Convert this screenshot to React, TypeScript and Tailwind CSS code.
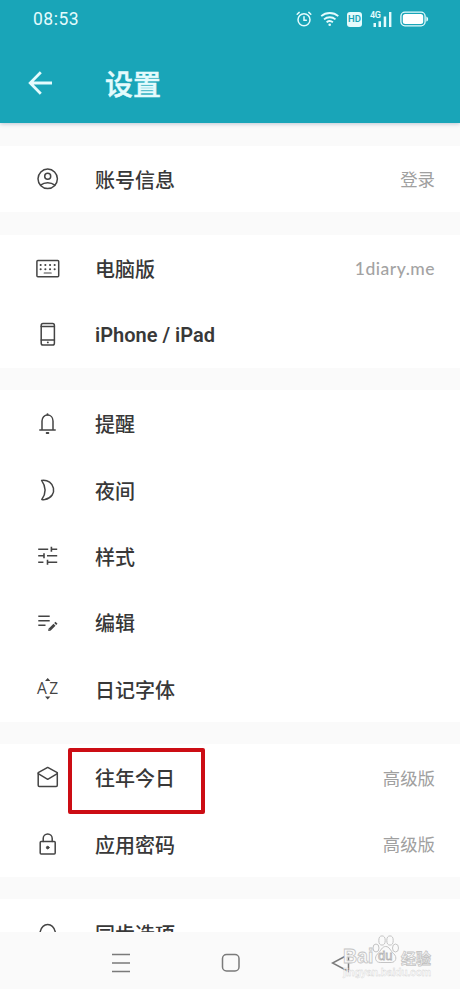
import type { ReactNode } from 'react'

interface SettingItem {
  id: string
  label: string
  icon: ReactNode
  value?: string
  latin?: boolean
  highlighted?: boolean
}

function Icon({ children }: { children: ReactNode }) {
  return (
    <svg
      width="24"
      height="24"
      viewBox="0 0 24 24"
      fill="none"
      stroke="currentColor"
      strokeWidth="1.5"
      strokeLinecap="round"
      strokeLinejoin="round"
      className="shrink-0 text-[#444444]"
    >
      {children}
    </svg>
  )
}

const AccountIcon = () => (
  <Icon>
    <circle cx="11.7" cy="11.8" r="9.7" />
    <circle cx="11.7" cy="9.3" r="3" />
    <path d="M4.6 18.2C8.6 14.9 14.8 14.9 18.8 18.2" />
  </Icon>
)

const KeyboardIcon = () => (
  <Icon>
    <rect x="0.9" y="4.5" width="21.8" height="16.2" rx="1" />
    <path d="M4.6 9h.1M9.3 9h.1M14 9h.1M18.6 9h.1M4.6 13.200h.1M9.3 13.200h.1M14 13.200h.1M18.6 13.200h.1" strokeWidth="2" />
    <path d="M8.2 17h7" strokeWidth="1.2" />
  </Icon>
)

const PhoneIcon = () => (
  <Icon>
    <rect x="5.2" y="1.6" width="13.2" height="21.4" rx="1.8" />
    <path d="M5.2 4.5h13.2M5.2 18h13.2" />
    <path d="M11.8 20.4h.1" strokeWidth="1.8" />
  </Icon>
)

const BellIcon = () => (
  <Icon>
    <path d="M3.8 19h15.400M6 19V10C6 6.400 8.400 4 11.500 4s5.500 2.400 5.500 6v9" />
    <path d="M11.500 3.200v.3M10.700 22h1.600" strokeWidth="2" />
  </Icon>
)

const MoonIcon = () => (
  <Icon>
    <path d="M5.6 2.4c13-1.8 17.5 16 3.2 19.2-1 .2-2.2.1-3-.1 4-5.500 4.3-12.700-.2-19.100z" />
  </Icon>
)

const TuneIcon = () => (
  <Icon>
    <g strokeLinecap="butt" strokeWidth="1.6">
      <path d="M2.200 5.200h10M15.400 2.700v5M15.400 5.200h5.800" />
      <path d="M2.200 11.700h5.200M8 9.200v5M11 11.700h10.200" />
      <path d="M2.200 18.200h5.200M11.500 15.700v5M11.500 18.200h9.700" />
    </g>
  </Icon>
)

const EditIcon = () => (
  <Icon>
    <path d="M2.300 6.200h11.400M2.300 10.700h11.400M2.300 15.200h7.200" strokeWidth="1.600" strokeLinecap="butt" />
    <path d="M13.500 19.700l5-5" strokeWidth="2.800" strokeLinecap="butt" />
    <path d="M19.200 14l1.300-1.300" strokeWidth="2.800" strokeLinecap="butt" />
    <path d="M12.200 21l.3-2.300 2 2z" fill="currentColor" stroke="none" />
  </Icon>
)

// The letters are text, only the two small arrows are drawn
const FontIcon = () => (
  <div className="relative flex h-6 w-6 shrink-0 items-center justify-between pl-px pr-[2px] font-['Open_Sans',sans-serif] text-[15.5px] font-medium leading-none text-[#444444]">
    <span>A</span>
    <span>Z</span>
    <svg width="24" height="24" viewBox="0 0 24 24" fill="currentColor" className="absolute inset-0">
      <path d="M9 3.900l2.700-2.900 2.700 2.900zM9 19.600l2.700 2.900 2.700-2.900z" />
    </svg>
  </div>
)

const MailIcon = () => (
  <Icon>
    <path d="M2.200 7.700v12.600c0 .7.400 1.100 1.100 1.100h16.900c.7 0 1.100-.4 1.100-1.100V7.700l-9.600-5.300z" />
    <path d="M2.200 8.700l9.500 5.600 9.600-5.600" />
  </Icon>
)

const LockIcon = () => (
  <Icon>
    <rect x="4.200" y="9.500" width="15" height="12.500" rx="1" />
    <path d="M7.200 9.500V6.400a4.500 4.500 0 0 1 9 0v3.100" />
    <circle cx="11.700" cy="15.600" r="1.300" fill="currentColor" strokeWidth="1" />
  </Icon>
)

const SyncIcon = () => (
  <Icon>
    <path d="M4.200 10.600C5.400 6.200 8 3.500 11.700 3.500s6.300 2.700 7.500 7.100" />
  </Icon>
)

const groups: SettingItem[][] = [
  [{ id: 'account', label: '账号信息', icon: <AccountIcon />, value: '登录' }],
  [
    { id: 'desktop', label: '电脑版', icon: <KeyboardIcon />, value: '1diary.me', latin: true },
    { id: 'ios', label: 'iPhone / iPad', icon: <PhoneIcon />, latin: true },
  ],
  [
    { id: 'reminder', label: '提醒', icon: <BellIcon /> },
    { id: 'night', label: '夜间', icon: <MoonIcon /> },
    { id: 'style', label: '样式', icon: <TuneIcon /> },
    { id: 'edit', label: '编辑', icon: <EditIcon /> },
    { id: 'font', label: '日记字体', icon: <FontIcon /> },
  ],
  [
    { id: 'memories', label: '往年今日', icon: <MailIcon />, value: '高级版', highlighted: true },
    { id: 'passcode', label: '应用密码', icon: <LockIcon />, value: '高级版' },
  ],
  [{ id: 'sync', label: '同步选项', icon: <SyncIcon /> }],
]

function StatusBar() {
  return (
    <div className="flex h-[38px] items-center justify-between pl-[33px] pr-[31px] text-[#e4fbfd]">
      <span className="font-['Roboto',sans-serif] text-[17.5px] tracking-[0.5px]">08:53</span>
      <div className="flex items-center">
        <svg width="16" height="16" viewBox="0 0 16 16" fill="none" stroke="currentColor" strokeWidth="1.500" strokeLinecap="round">
          <circle cx="8" cy="8.800" r="6" />
          <path d="M8 5.800v3.400h2.300M1.200 3.300l2-1.900M14.800 3.300l-2-1.900" />
        </svg>
        <svg width="20" height="16" viewBox="0 0 20 16" fill="none" stroke="currentColor" strokeWidth="1.800" className="ml-[8px]">
          <path d="M1.200 5.200c4.800-4.300 12.300-4.300 17.100 0M4 8.400c3.300-2.900 8.200-2.900 11.500 0M6.600 11.300c1.900-1.500 4.500-1.500 6.300 0" />
          <circle cx="9.700" cy="13.800" r="1.300" fill="currentColor" stroke="none" />
        </svg>
        <span className="ml-[7px] flex h-[15px] w-[15px] items-center justify-center rounded-[3px] bg-[#e4fbfd] font-['Roboto',sans-serif] text-[9.5px] font-semibold leading-none text-[#19a5b8]">
          HD
        </span>
        <div className="relative ml-[8px] h-4 w-[22px]">
          <span className="absolute left-0 top-0 font-['Roboto',sans-serif] text-[9px] font-semibold leading-none tracking-[-0.5px]">4G</span>
          <svg width="22" height="16" viewBox="0 0 22 16" fill="currentColor">
            <path d="M3.500 12H6v4H3.500zM8.500 10.200H11V16H8.500zM13.700 5.500h2.500V16h-2.500zM19 1h2.400v15H19z" />
          </svg>
        </div>
        <svg width="29" height="16" viewBox="0 0 29 16" className="ml-[8px]">
          <rect x="0.900" y="1.200" width="24.200" height="13.600" rx="4" fill="none" stroke="currentColor" strokeWidth="1.300" />
          <rect x="2.800" y="3.100" width="20.400" height="9.800" rx="2.500" fill="#ffffff" />
          <path d="M26.300 5.400c2.400.8 2.400 4.400 0 5.200z" fill="currentColor" />
        </svg>
      </div>
    </div>
  )
}

function Header() {
  return (
    <header className="relative z-10 h-[123px] shrink-0 bg-[#19a5b8] shadow-[0_1px_4px_rgba(40,70,110,0.28)]">
      <StatusBar />
      <div className="flex h-[90px] items-center pl-[28px]">
        <svg width="25" height="24" viewBox="0 0 25 24" fill="none" stroke="#e4fbfd" strokeWidth="2.800">
          <path d="M24 12H3M12.800 1.200L2.200 12l10.600 10.800" />
        </svg>
        <h1 className="ml-[52px] text-[28px] font-medium leading-none text-[#e4fbfd] [-webkit-text-stroke:0.5px_#e4fbfd]">设置</h1>
      </div>
    </header>
  )
}

function SettingRow({ item }: { item: SettingItem }) {
  return (
    <div className="relative flex h-[66.4px] items-center pl-9 pr-[25px]">
      {item.icon}
      <span
        className={
          item.latin && !item.value
            ? "ml-[35px] mt-[2px] font-['Roboto',sans-serif] text-[20px] font-semibold leading-none text-[#383838]"
            : 'ml-[35px] mt-[2px] text-[20px] font-medium leading-none text-[#383838]'
        }
      >
        {item.label}
      </span>
      {item.value && (
        <span
          className={
            item.latin
              ? "ml-auto mt-[2px] font-['Lato',sans-serif] text-[17.5px] font-medium leading-none tracking-[0.5px] text-[#a3a3a3]"
              : 'ml-auto text-[17.400px] leading-none text-[#a0a0a0]'
          }
        >
          {item.value}
        </span>
      )}
      {item.highlighted && (
        <div className="absolute left-[68px] top-[4px] h-[66px] w-[137px] rounded-[2px] border-4 border-[#cc0d14]"></div>
      )}
    </div>
  )
}

function Watermark() {
  return (
    <div className="absolute left-[343px] top-[2px] h-[46px] w-[90px] font-['Liberation_Sans',sans-serif] leading-none text-[#fafafa]">
      <div className="flex h-[32px] items-end [-webkit-text-stroke:0.8px_#c4c4c4]">
        <span className="w-[29px] text-[19.5px] font-bold">Bai</span>
        <div className="relative h-[32px] w-[27px]">
          <svg width="27" height="30" viewBox="0 0 27 30" fill="#fafafa" stroke="#c4c4c4" strokeWidth="1">
            <ellipse cx="4" cy="14" rx="3" ry="4" />
            <ellipse cx="10" cy="6.500" rx="3.200" ry="4.600" />
            <ellipse cx="18" cy="6.500" rx="3.200" ry="4.600" />
            <ellipse cx="23.500" cy="14" rx="3" ry="4" />
            <path d="M13.700 12.500c3.800 0 4.600 4.200 8 7.200 4 3.600 2 8.800-2.500 8.800h-11c-4.600 0-6.400-5-2.600-8.600 3.400-3.200 4.300-7.400 8.100-7.400z" />
          </svg>
          <span className="absolute left-[6px] top-[15px] text-[13px] [-webkit-text-stroke:0.8px_#b4b4b4]">du</span>
        </div>
        <span className="ml-[2px] mb-px font-['Noto_Sans_CJK_SC',sans-serif] text-[15px] font-bold">经验</span>
      </div>
      <div className="mt-px text-[10.5px] font-bold tracking-[-0.25px] [-webkit-text-stroke:0.3px_#cfcfcf]">jingyan.baidu.com</div>
    </div>
  )
}

function NavigationBar() {
  return (
    <nav className="relative h-[57px] shrink-0 bg-[#fafafa] text-[#7a7a7a]">
      <div className="flex h-full items-center pl-[111px] pt-[5px]">
        <svg width="20" height="20" viewBox="0 0 20 20" fill="none" stroke="currentColor" strokeWidth="1.300">
          <path d="M1 1.500h18M1 10h18M1 18.500h18" />
        </svg>
        <svg width="20" height="20" viewBox="0 0 20 20" fill="none" stroke="currentColor" strokeWidth="1.500" className="ml-[90px]">
          <rect x="1.500" y="1.500" width="16.500" height="16.500" rx="4" />
        </svg>
        <svg width="20" height="20" viewBox="0 0 20 20" fill="none" stroke="currentColor" strokeWidth="1.500" className="ml-[90px]">
          <path d="M17.500 1.500L1.500 10l16 8.500z" />
        </svg>
      </div>
      <Watermark />
    </nav>
  )
}

export default function App() {
  return (
    <div className="flex h-[989px] w-[460px] flex-col overflow-hidden bg-[#fafafa] font-['Noto_Sans_CJK_SC',sans-serif]">
      <Header />
      <main className="flex min-h-0 flex-1 flex-col gap-[22.400px] overflow-hidden pt-[23px]">
        {groups.map((group) => (
          <section key={group[0].id} className="shrink-0 bg-white">
            {group.map((item) => (
              <SettingRow key={item.id} item={item} />
            ))}
          </section>
        ))}
      </main>
      <NavigationBar />
    </div>
  )
}
